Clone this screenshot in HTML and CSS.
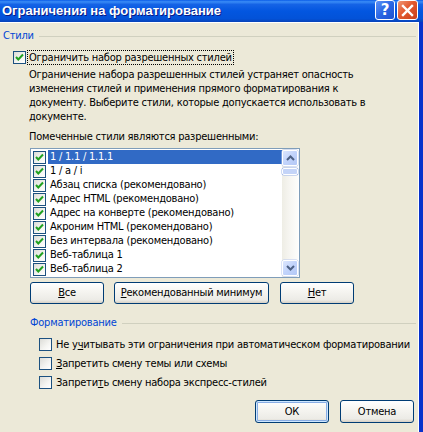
FILE: index.html
```html
<!DOCTYPE html>
<html lang="ru">
<head>
<meta charset="utf-8">
<title>Ограничения на форматирование</title>
<link rel="stylesheet" href="styles.css">
</head>
<body>
<div class="window">
  <div class="titlebar">
    <span class="title">Ограничения на форматирование</span>
    <span class="tb-btn help">?</span>
    <span class="tb-btn close"><svg width="13" height="13" viewBox="0 0 13 13"><path d="M2 2 L11 11 M11 2 L2 11" stroke="#fff" stroke-width="2.4" stroke-linecap="square"/></svg></span>
  </div>
  <div class="client">
    <div class="group-head g1"><span>Стили</span><i class="rule"></i></div>

    <div class="check-main">
      <span class="cb checked"><svg width="11" height="11" viewBox="0 0 11 11"><path d="M2 5 L4.3 7.5 L9 2.5" fill="none" stroke="#21A121" stroke-width="2"/></svg></span>
      <span class="focus">Ограничить набор разрешенных стилей</span>
    </div>

    <p class="para">Ограничение набора разрешенных стилей устраняет опасность<br>изменения стилей и применения прямого форматирования к<br>документу. Выберите стили, которые допускается использовать в<br>документе.</p>

    <div class="list-label">Помеченные стили являются разрешенными:</div>

    <div class="listbox">
      <div class="items">
        <div class="item sel"><span class="cb checked"><svg width="11" height="11" viewBox="0 0 11 11"><path d="M2 5 L4.3 7.5 L9 2.5" fill="none" stroke="#21A121" stroke-width="2"/></svg></span><span class="txt">1 / 1.1 / 1.1.1</span></div>
        <div class="item"><span class="cb checked"><svg width="11" height="11" viewBox="0 0 11 11"><path d="M2 5 L4.3 7.5 L9 2.5" fill="none" stroke="#21A121" stroke-width="2"/></svg></span><span class="txt">1 / a / i</span></div>
        <div class="item"><span class="cb checked"><svg width="11" height="11" viewBox="0 0 11 11"><path d="M2 5 L4.3 7.5 L9 2.5" fill="none" stroke="#21A121" stroke-width="2"/></svg></span><span class="txt">Абзац списка (рекомендовано)</span></div>
        <div class="item"><span class="cb checked"><svg width="11" height="11" viewBox="0 0 11 11"><path d="M2 5 L4.3 7.5 L9 2.5" fill="none" stroke="#21A121" stroke-width="2"/></svg></span><span class="txt">Адрес HTML (рекомендовано)</span></div>
        <div class="item"><span class="cb checked"><svg width="11" height="11" viewBox="0 0 11 11"><path d="M2 5 L4.3 7.5 L9 2.5" fill="none" stroke="#21A121" stroke-width="2"/></svg></span><span class="txt">Адрес на конверте (рекомендовано)</span></div>
        <div class="item"><span class="cb checked"><svg width="11" height="11" viewBox="0 0 11 11"><path d="M2 5 L4.3 7.5 L9 2.5" fill="none" stroke="#21A121" stroke-width="2"/></svg></span><span class="txt">Акроним HTML (рекомендовано)</span></div>
        <div class="item"><span class="cb checked"><svg width="11" height="11" viewBox="0 0 11 11"><path d="M2 5 L4.3 7.5 L9 2.5" fill="none" stroke="#21A121" stroke-width="2"/></svg></span><span class="txt">Без интервала (рекомендовано)</span></div>
        <div class="item"><span class="cb checked"><svg width="11" height="11" viewBox="0 0 11 11"><path d="M2 5 L4.3 7.5 L9 2.5" fill="none" stroke="#21A121" stroke-width="2"/></svg></span><span class="txt">Веб-таблица 1</span></div>
        <div class="item"><span class="cb checked"><svg width="11" height="11" viewBox="0 0 11 11"><path d="M2 5 L4.3 7.5 L9 2.5" fill="none" stroke="#21A121" stroke-width="2"/></svg></span><span class="txt">Веб-таблица 2</span></div>
      </div>
      <div class="scrollbar">
        <span class="sb-btn"><svg width="9" height="6" viewBox="0 0 9 6"><path d="M1 5 L4.5 1.5 L8 5" fill="none" stroke="#4D6185" stroke-width="2"/></svg></span>
        <span class="thumb"></span>
        <span class="track"></span>
        <span class="sb-btn"><svg width="9" height="6" viewBox="0 0 9 6"><path d="M1 1 L4.5 4.5 L8 1" fill="none" stroke="#4D6185" stroke-width="2"/></svg></span>
      </div>
    </div>

    <div class="btn-row">
      <button class="btn w74"><u>В</u>се</button>
      <button class="btn w155"><u>Р</u>екомендованный минимум</button>
      <button class="btn w74"><u>Н</u>ет</button>
    </div>

    <div class="group-head g2"><span>Форматирование</span><i class="rule"></i></div>

    <div class="checks">
      <div class="check-row"><span class="cb"></span><span>Не у<u>ч</u>итывать эти ограничения при автоматическом форматировании</span></div>
      <div class="check-row"><span class="cb"></span><span><u>З</u>апретить смену темы или схемы</span></div>
      <div class="check-row"><span class="cb"></span><span>Запрети<u>т</u>ь смену набора экспресс-стилей</span></div>
    </div>

    <div class="footer">
      <button class="btn w74 default">ОК</button>
      <button class="btn w74">Отмена</button>
    </div>
  </div>
</div>
</body>
</html>
```
FILE: styles.css
```css
* { box-sizing: border-box; }
html, body { margin: 0; padding: 0; }
body {
  width: 423px;
  height: 432px;
  overflow: hidden;
  font-family: "DejaVu Sans Condensed", "DejaVu Sans", sans-serif;
  font-stretch: condensed;
  font-size: 11px;
  letter-spacing: -0.23px;
  color: #000;
}
.window {
  width: 423px;
  height: 432px;
  display: flex;
  flex-direction: column;
  background: #ECE9D8;
}
.titlebar {
  height: 22px;
  flex: none;
  display: flex;
  align-items: center;
  padding-left: 2px;
  background: linear-gradient(#0A5CE8 0%, #3A8CF6 8%, #1563E6 20%, #0356E0 50%, #0352D8 85%, #0843B8 100%);
}
.title {
  flex: 1;
  color: #fff;
  font-family: "Liberation Sans", Arial, sans-serif;
  font-stretch: normal;
  font-weight: bold;
  font-size: 13px;
  letter-spacing: 0;
  text-shadow: 1px 1px 0 #0A1883;
  margin-top: -1px;
}
.tb-btn {
  width: 20px;
  height: 20px;
  border: 1px solid #fff;
  border-radius: 3px;
  display: flex;
  align-items: center;
  justify-content: center;
  margin-top: -2px;
}
.help {
  margin-right: 2px;
  background: linear-gradient(135deg, #5E93F7 0%, #2A66E4 50%, #1D52D0 100%);
  color: #fff;
  font-family: "DejaVu Sans", sans-serif;
  font-weight: bold;
  font-size: 15px;
  font-stretch: normal;
  letter-spacing: 0;
}
.close {
  width: 21px;
  margin-right: 5px;
  background: linear-gradient(135deg, #F19775 0%, #E2592F 45%, #C9401B 100%);
}
.client {
  flex: 1;
  border-right: 4px solid #0832CB;
  box-shadow: inset -1px 0 0 #fff, inset 0 1px 0 #fff;
  padding: 0 3px 0 0;
}
.group-head {
  display: flex;
  align-items: center;
  height: 14px;
  line-height: 14px;
  color: #0046D5;
}
.group-head .rule {
  flex: 1;
  height: 1px;
  background: #D0D0BF;
  margin-left: 5px;
}
.g1 { margin-top: 7px; padding-left: 3px; }
.g2 { margin-top: 12px; padding-left: 30px; }

.cb {
  width: 13px;
  height: 13px;
  flex: none;
  border: 1px solid #1C5180;
  background: linear-gradient(135deg, #DCDCD7 0%, #F5F5F2 60%, #fff 100%);
  display: inline-flex;
  align-items: center;
  justify-content: center;
}
.check-main {
  margin-top: 7px;
  height: 14px;
  display: flex;
  align-items: center;
  padding-left: 13px;
}
.focus {
  margin-left: 2px;
  padding: 0 1px;
  line-height: 13px;
  outline: 1px dotted #000;
}
.para {
  margin: 4px 0 0 29px;
  line-height: 14px;
  white-space: nowrap;
}
.list-label {
  margin: 6px 0 0 29px;
  line-height: 14px;
}
.listbox {
  margin: 4px 0 0 30px;
  width: 270px;
  height: 130px;
  border: 1px solid #7F9DB9;
  background: #fff;
  display: flex;
}
.items {
  flex: 1;
  padding-top: 1px;
}
.item {
  height: 14px;
  display: flex;
  align-items: center;
  padding-left: 2px;
}
.item .txt {
  margin-left: 2px;
  padding: 0 2px;
  height: 14px;
  line-height: 14px;
  white-space: nowrap;
}
.item.sel .txt {
  flex: 1;
  background: #316AC5;
  color: #fff;
}
.scrollbar {
  width: 16px;
  display: flex;
  flex-direction: column;
  padding: 1px 0;
  margin-right: 1px;
  background: linear-gradient(90deg, #EEEDE5 0%, #F7F6F2 50%, #FDFDFB 100%);
}
.sb-btn {
  height: 16px;
  flex: none;
  border: 1px solid #fff;
  border-radius: 2px;
  background: linear-gradient(135deg, #DCE6FD 0%, #C1D3FB 50%, #B4C8F6 100%);
  box-shadow: 0 0 0 0.5px #B7C8F0;
  display: flex;
  align-items: center;
  justify-content: center;
}
.thumb {
  height: 7px;
  margin-top: 2px;
  border: 1px solid #fff;
  border-radius: 2px;
  background: #C4D4F8;
  box-shadow: 0 0 0 0.5px #9CB3E8;
}
.track { flex: 1; }

.btn-row {
  margin: 4px 0 0 30px;
  display: flex;
  gap: 10px;
}
.btn {
  height: 22px;
  padding: 0;
  border: 1px solid #003C74;
  border-radius: 3px;
  background: linear-gradient(#FFFFFF 0%, #F6F5F1 40%, #ECEBE6 85%, #D6D0C5 100%);
  font-family: inherit;
  font-stretch: condensed;
  font-size: 11px;
  letter-spacing: -0.23px;
  color: #000;
  line-height: 20px;
}
.w74 { width: 74px; }
.w155 { width: 155px; }
.btn-row .btn:last-child { margin-left: 1px; }
.btn u, .check-row u { text-decoration: underline; text-underline-offset: 1px; }

.checks { margin-top: 5px; padding-left: 39px; }
.check-row {
  height: 19px;
  display: flex;
  align-items: center;
  gap: 4px;
  white-space: nowrap;
}
.footer {
  margin-top: 8px;
  display: flex;
  justify-content: flex-end;
  gap: 11px;
  padding-right: 2px;
}
.footer .btn { height: 23px; }
.btn.default {
  box-shadow: inset 0 0 0 1px #CEE7FF, inset 0 0 0 2px #89ADE4;
}
```
